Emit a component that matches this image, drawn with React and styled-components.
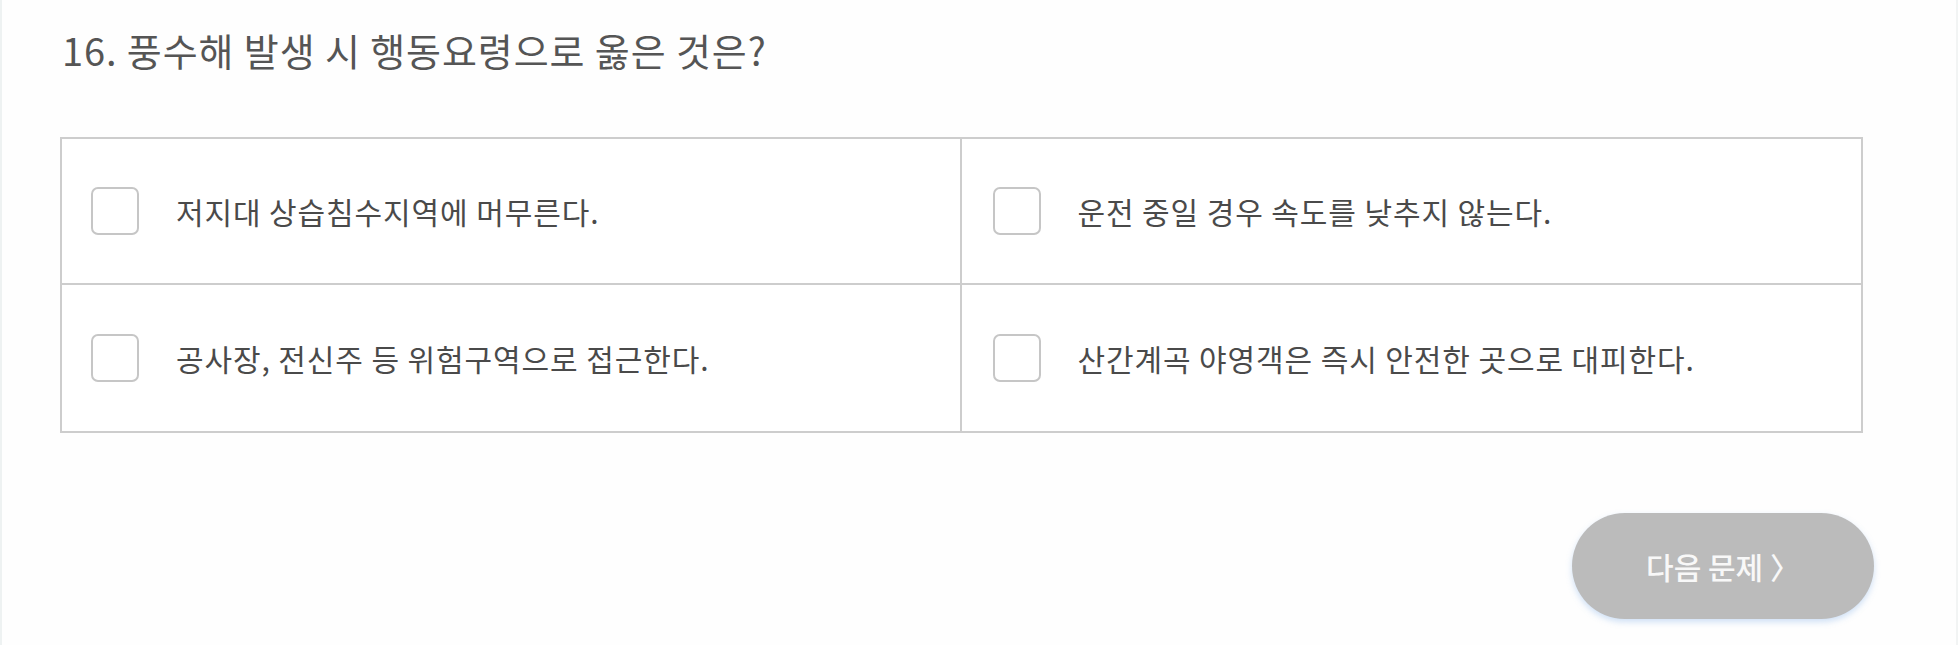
import React from 'react';
import styled, { createGlobalStyle } from 'styled-components';

const GlobalStyle = createGlobalStyle`
  html, body {
    margin: 0;
    padding: 0;
    background: #ffffff;
  }
  body {
    font-family: "Noto Sans CJK KR", "Noto Sans", sans-serif;
  }
`;

const Page = styled.div`
  box-sizing: border-box;
  width: 1958px;
  height: 645px;
  padding: 25px 93px 0 58px;
  border-left: 2px solid #eef2f2;
  border-right: 2px solid #f2f4f4;
  background: #fefefe;
  overflow: hidden;
`;

const Title = styled.h2`
  margin: 0 0 0 2px;
  font-size: 38px;
  line-height: 50px;
  font-weight: 400;
  color: #555555;
  letter-spacing: 0.9px;
`;

const Choices = styled.div`
  display: grid;
  grid-template-columns: 1fr 1fr;
  margin-top: 62px;
  border: 2px solid #cdcdcd;
  background: #ffffff;
`;

const Choice = styled.label`
  display: flex;
  align-items: center;
  gap: 37px;
  height: 146px;
  box-sizing: border-box;
  padding-left: ${p => (p.$col === 0 ? '29px' : '31px')};
  border-right: ${p => (p.$col === 0 ? '2px solid #cdcdcd' : 'none')};
  border-bottom: ${p => (p.$row === 0 ? '2px solid #cdcdcd' : 'none')};
  cursor: pointer;
`;

const Box = styled.span`
  flex: none;
  width: 44px;
  height: 44px;
  border: 2px solid #c6c6c6;
  border-radius: 7px;
  background: #fff;
`;

const ChoiceText = styled.span`
  font-size: 30px;
  font-weight: 400;
  color: #4a4a4a;
  letter-spacing: 0.9px;
`;

const Footer = styled.div`
  display: flex;
  justify-content: flex-end;
  margin-top: 80px;
  margin-right: -11px;
`;

const NextButton = styled.button`
  width: 302px;
  height: 106px;
  border: none;
  border-radius: 53px;
  background: #bbbbbb;
  color: #f8f8f8;
  font-family: "Noto Sans CJK KR", "Noto Sans", sans-serif;
  font-size: 30px;
  font-weight: 500;
  box-shadow: 0 3px 6px rgba(120, 170, 230, 0.35);
  cursor: default;
`;

const choices = [
  '저지대 상습침수지역에 머무른다.',
  '운전 중일 경우 속도를 낮추지 않는다.',
  '공사장, 전신주 등 위험구역으로 접근한다.',
  '산간계곡 야영객은 즉시 안전한 곳으로 대피한다.',
];

export default function App() {
  return (
    <>
      <GlobalStyle />
      <Page>
        <Title>16. 풍수해 발생 시 행동요령으로 옳은 것은?</Title>
        <Choices>
          {choices.map((text, i) => (
            <Choice key={i} $col={i % 2} $row={Math.floor(i / 2)}>
              <Box />
              <ChoiceText>{text}</ChoiceText>
            </Choice>
          ))}
        </Choices>
        <Footer>
          <NextButton disabled>다음 문제 〉</NextButton>
        </Footer>
      </Page>
    </>
  );
}
